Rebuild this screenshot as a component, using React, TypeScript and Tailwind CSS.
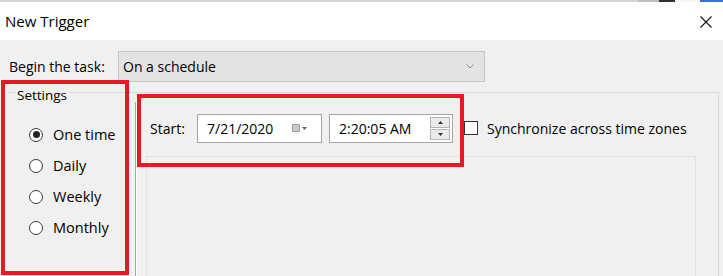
import React from "react";

const options = ["One time", "Daily", "Weekly", "Monthly"];

function Radio({ checked }: { checked?: boolean }) {
  return (
    <span className="w-[14px] h-[14px] rounded-full border border-[#3a3a3a] bg-white flex items-center justify-center shrink-0">
      {checked && <span className="w-[7px] h-[7px] rounded-full bg-[#222]" />}
    </span>
  );
}

export default function App() {
  return (
    <div className="relative w-[723px] h-[276px] overflow-hidden bg-[#f0f0f0] text-black font-['Open_Sans',sans-serif] text-[14px]">
      {/* top strip */}
      <div className="h-[2px] bg-[#d4d4d4] flex justify-end">
        <div className="w-[21px] bg-[#bdbdbd]" />
        <div className="w-[16px] bg-[#2e3338]" />
        <div className="w-[25px] bg-[#f5f5f5]" />
        <div className="w-[23px] bg-[#3b6fd4]" />
      </div>

      {/* title bar */}
      <div className="h-[38px] bg-white flex items-center justify-between pl-[5px] pr-[11px]">
        <span className="text-[15px] leading-none">New Trigger</span>
        <svg width="12" height="12" viewBox="0 0 12 12" className="mt-[2px]">
          <path d="M0.5 0.5 L11.5 11.5 M11.5 0.5 L0.5 11.5" stroke="#111" strokeWidth="1.1" />
        </svg>
      </div>

      {/* begin the task */}
      <div className="flex items-center mt-[11px] pl-[9px]">
        <span className="w-[109px]">Begin the task:</span>
        <div className="w-[367px] h-[31px] border border-[#c6c6c6] bg-[#e3e3e3] flex items-center justify-between pl-[4px] pr-[10px]">
          <span>On a schedule</span>
          <svg width="8" height="5" viewBox="0 0 8 5">
            <path d="M0.5 0.5 L4 4 L7.5 0.5" fill="none" stroke="#888" strokeWidth="1" />
          </svg>
        </div>
      </div>

      {/* settings group */}
      <fieldset className="mt-[1px] ml-[8px] mr-[4px] h-[200px] border-t border-r border-[#dadada] flex">
        <legend className="ml-[7px] px-[2px] text-[13.5px] leading-[18px] translate-y-[3px]">Settings</legend>
        <div className="flex w-full h-full">
          <div className="w-[127px] flex flex-col gap-[12px] pt-[24px] pl-[21px]">
            {options.map((o, i) => (
              <label key={o} className="flex items-center gap-[10px] h-[19px] text-[14.5px]">
                <Radio checked={i === 0} />
                <span>{o}</span>
              </label>
            ))}
          </div>

          <div className="flex-1 flex flex-col mt-[1px] border-l border-[#a8a8a8] shadow-[inset_1px_0_0_#ffffff]">
            <div className="flex items-center h-[30px] mt-[11px] pl-[14px]">
              <span className="w-[47px]">Start:</span>
              <div className="w-[125px] h-[29px] border border-[#a5a5a5] bg-white flex items-center justify-between pl-[9px] pr-[14px]">
                <span>7/21/2020</span>
                <span className="flex items-center gap-[2px]">
                  <span className="w-[8px] h-[8px] bg-[#c8c8c8] border border-[#9c9c9c] rounded-[1px]" />
                  <svg width="5" height="3" viewBox="0 0 5 3">
                    <path d="M0 0 H5 L2.5 3 Z" fill="#666" />
                  </svg>
                </span>
              </div>
              <div className="ml-[7px] w-[124px] h-[29px] border border-[#a5a5a5] bg-white flex items-center justify-between pl-[9px] pr-[2px]">
                <span>2:20:05 AM</span>
                <span className="flex flex-col gap-[1px]">
                  <span className="w-[20px] h-[11px] border border-[#b4b4b4] bg-[#eaeaea] flex items-center justify-center">
                    <svg width="5" height="3" viewBox="0 0 5 3"><path d="M0 3 H5 L2.5 0 Z" fill="#333" /></svg>
                  </span>
                  <span className="w-[20px] h-[11px] border border-[#b4b4b4] bg-[#eaeaea] flex items-center justify-center">
                    <svg width="5" height="3" viewBox="0 0 5 3"><path d="M0 0 H5 L2.5 3 Z" fill="#333" /></svg>
                  </span>
                </span>
              </div>
              <label className="ml-[11px] flex items-center gap-[9px]">
                <span className="w-[14px] h-[14px] border border-[#333] bg-white" />
                <span>Synchronize across time zones</span>
              </label>
            </div>
            <div className="flex-1 mt-[13px] ml-[10px] mr-[22px] border-t border-l border-r border-[#e2e2e2]" />
          </div>
        </div>
      </fieldset>

      {/* annotation boxes */}
      <div className="absolute left-[1px] top-[80px] w-[128px] h-[195px] border-[4px] border-[#e31b23]" />
      <div className="absolute left-[137px] top-[94px] w-[327px] h-[73px] border-[4px] border-[#e31b23]" />
    </div>
  );
}
